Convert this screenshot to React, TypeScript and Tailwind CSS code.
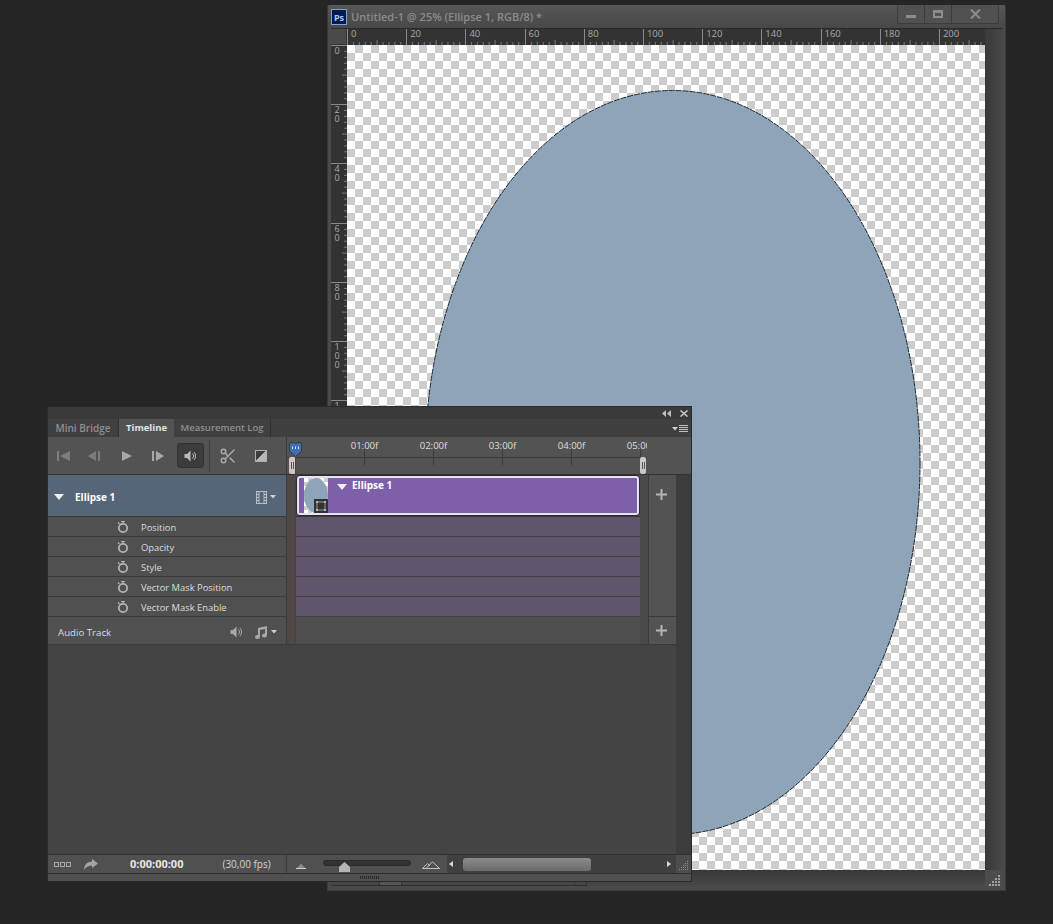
import React from 'react';
import { Scissors } from 'lucide-react';

const font = "font-['Open_Sans','Noto_Sans',sans-serif]";

const RulerTicks = () => (
    <svg width="59.2" height="16" className="absolute left-0 top-0">
        {Array.from({ length: 10 }).map((_, i) => {
            const x = i * 5.92 + 0.5;
            const h = i === 0 ? 16 : i === 5 ? 5 : 3;
            return <line key={i} x1={x} x2={x} y1={16 - h} y2={16} stroke={i === 0 ? '#8a8a8a' : '#7d7d7d'} />;
        })}
    </svg>
);

const LeftTicks = () => (
    <svg width="16" height="59.2" className="absolute left-0 top-0">
        {Array.from({ length: 10 }).map((_, i) => {
            const y = i * 5.92 + 0.5;
            const w = i === 0 ? 16 : i === 5 ? 5 : 3;
            return <line key={i} y1={y} y2={y} x1={16 - w} x2={16} stroke={i === 0 ? '#8a8a8a' : '#7d7d7d'} />;
        })}
    </svg>
);

const Stopwatch = () => (
    <svg width="14" height="14" viewBox="0 0 14 14" fill="none" stroke="#b4b4b4">
        <circle cx="7" cy="8" r="4.2" strokeWidth="1.8" />
        <path d="M5 1.5h4M7 1.5v2M2 2.5l1.5 1.5" strokeWidth="1.2" />
    </svg>
);

const Speaker = ({ color = '#a8a8a8' }: { color?: string }) => (
    <svg width="13" height="12" viewBox="0 0 13 12" fill="none">
        <path d="M0.5 4h2.5l3.5-3.5v11L3 8H0.5z" fill={color} />
        <path d="M8.5 3.5a3.5 3.5 0 0 1 0 5M10 2a6 6 0 0 1 0 8" stroke={color} />
    </svg>
);

const Caret = () => (
    <svg width="6" height="4" viewBox="0 0 6 4"><path d="M0 0h6L3 3.5z" fill="#d0d0d0" /></svg>
);

const Mountain = ({ big }: { big?: boolean }) =>
    big ? (
        <svg width="18" height="8" viewBox="0 0 18 8" fill="none" stroke="#c4c4c4">
            <path d="M0.5 7.5L5.5 2.5l2.5 2.5M4 7.5L10.5 0.8l7 6.7z" />
            <path d="M0.5 7.5h17" />
        </svg>
    ) : (
        <svg width="10" height="6" viewBox="0 0 10 6">
            <path d="M0 6L5 0.5 10 6z" fill="#8a8a8a" />
            <path d="M0 5.5h10" stroke="#d0d0d0" />
        </svg>
    );

const TransportIcon = ({ d, color = '#808080' }: { d: string; color?: string }) => (
    <svg width="14" height="10" viewBox="0 0 14 10"><path d={d} fill={color} /></svg>
);

const Plus = () => (
    <svg width="11" height="11" viewBox="0 0 11 11"><path d="M4.5 0h2v4.5H11v2H6.5V11h-2V6.5H0v-2h4.5z" fill="#b5b5b5" /></svg>
);

const PropRow = ({ name }: { name: string }) => (
    <div className="h-5 flex items-center border-b border-[#3a3a3a] bg-[#505050] pl-[68px] pt-[1px] box-border">
        <Stopwatch />
        <span className="ml-[11px] mt-[2px] text-[9.4px] text-[#dcdcdc] whitespace-nowrap">{name}</span>
    </div>
);

const App: React.FC = () => {
    const props = ['Position', 'Opacity', 'Style', 'Vector Mask Position', 'Vector Mask Enable'];

    return (
        <div className={`relative w-[1053px] h-[924px] overflow-hidden bg-[#252525] ${font}`}>
            {/* Document window */}
            <div className="absolute left-[327px] top-[5px] w-[679px] h-[886px] flex flex-col rounded-t-[3px] border border-[#3a3a3a] border-t-[#5a5a5a] bg-[#4a4a4a]">
                <div className="h-[22px] flex items-center bg-gradient-to-b from-[#565656] to-[#484848] pl-[3px] relative">
                    <div className="w-[16px] h-[16px] bg-[#001c4f] border border-[#7fa3d6] flex items-center justify-center text-[9px] font-bold text-[#a9cdf5] leading-none">Ps</div>
                    <span className="ml-[4px] text-[11px] font-semibold text-[#8b8b8b] whitespace-nowrap">Untitled-1 @ 25% (Ellipse 1, RGB/8) *</span>
                    <div className="ml-auto mr-[6px] -mt-[5px] h-[19px] w-[102px] flex border border-t-0 border-[#3c3c3c] rounded-b-[3px] bg-[#515151]">
                        <div className="w-[27px] border-r border-[#3c3c3c] flex items-center justify-center">
                            <div className="w-[10px] h-[3px] bg-[#8c8c8c] mt-[5px]" />
                        </div>
                        <div className="w-[27px] border-r border-[#3c3c3c] flex items-center justify-center">
                            <div className="w-[10px] h-[8px] border-2 border-t-[3px] border-[#8c8c8c]" />
                        </div>
                        <div className="flex-1 flex items-center justify-center">
                            <svg width="11" height="10" viewBox="0 0 11 10"><path d="M1 0.5l9 9M10 0.5l-9 9" stroke="#8c8c8c" strokeWidth="2" /></svg>
                        </div>
                    </div>
                </div>
                <div className="flex-1 flex flex-col ml-[3px] mr-[3px] min-h-0 border-t border-[#2b2b2b]">
                    <div className="flex h-[16px]">
                        <div className="w-[16px] shrink-0 bg-[#4a4a4a] border-r border-b border-[#333]" />
                        <div className="w-[638px] shrink-0 flex overflow-x-clip bg-[#333333]">
                            {[0, 20, 40, 60, 80, 100, 120, 140, 160, 180, 200].map((n) => (
                                <div key={n} className="relative w-[59.2px] shrink-0 h-[16px]">
                                    <RulerTicks />
                                    <span className="absolute left-[4px] top-0 text-[9.5px] leading-[10px] text-[#a9a9a9]">{n}</span>
                                </div>
                            ))}
                        </div>
                        <div className="flex-1 bg-gradient-to-r from-[#3a3a3a] to-[#464646]" />
                    </div>
                    <div className="flex flex-1 min-h-0">
                        <div className="w-[16px] shrink-0 bg-[#333333] overflow-hidden">
                            {['0', '20', '40', '60', '80', '100', '120'].map((n) => (
                                <div key={n} className="relative w-[16px] h-[59.2px]">
                                    <LeftTicks />
                                    <div className="absolute left-[2px] top-[1px] w-[8px] text-center text-[9px] leading-[9px] text-[#a9a9a9] whitespace-pre-line">
                                        {n.split('').join('\n')}
                                    </div>
                                </div>
                            ))}
                        </div>
                        {/* Canvas */}
                        <div className="relative w-[638px] shrink-0 bg-[repeating-conic-gradient(#cdcdcd_0%_25%,#ffffff_0%_50%)] bg-[length:16px_16px]">
                            <svg width="638" height="826" className="absolute left-0 top-0">
                                <ellipse cx="325.5" cy="417.5" rx="247.5" ry="372" fill="#8ea5b9" stroke="#1c2530" strokeWidth="1" strokeDasharray="6 1" />
                            </svg>
                        </div>
                        <div className="flex-1 bg-gradient-to-r from-[#383838] to-[#484848]" />
                    </div>
                    <div className="flex h-[16px] mb-[4px]">
                        {/* Status strip, only its lower edge shows under the timeline */}
                        <div className="w-[256px] shrink-0 flex items-end border-b border-[#2f2f2f] bg-[#464646]">
                            <div className="ml-[48px] w-[24px] h-[5px] bg-[#555555] border-x border-[#333] flex justify-center">
                                <div className="w-[10px] h-[2px] rounded-b-full bg-[#a0a0a0]" />
                            </div>
                            <div className="ml-[77px] mb-[3px] w-[2px] h-[2px] bg-[#6fa3d8]" />
                            <div className="ml-[14px] mb-[3px] w-[2px] h-[2px] bg-[#8fb0d0]" />
                            <div className="ml-[17px] mb-[3px] w-[2px] h-[2px] bg-[#d8a050]" />
                            <div className="ml-[58px] w-[13px] h-[5px] border-x border-[#333]" />
                        </div>
                        <div className="flex-1 bg-gradient-to-b from-[#383838] to-[#484848]" />
                        <div className="w-[17px] bg-[#4c4c4c] flex items-end justify-end">
                            <svg width="14" height="12" viewBox="0 0 14 12">
                                {[[10, 1], [7, 4], [10, 4], [4, 7], [7, 7], [10, 7], [1, 10], [4, 10], [7, 10], [10, 10]].map(([x, y], i) => (
                                    <rect key={i} x={x} y={y} width="2" height="2" fill="#a0a0a0" />
                                ))}
                            </svg>
                        </div>
                    </div>
                </div>
            </div>

            {/* Timeline panel */}
            <div className="absolute left-[48px] top-[407px] w-[643px] h-[474px] flex flex-col bg-[#444444] shadow-[0_0_0_1px_#2a2a2a] text-[#dcdcdc]">
                <div className="h-[12px] bg-[#3a3a3a] flex items-center justify-end pr-[3px] gap-[9px]">
                    <svg width="9" height="7" viewBox="0 0 9 7"><path d="M4 0v7L0 3.5zM9 0v7L5 3.5z" fill="#bdbdbd" /></svg>
                    <svg width="8" height="7" viewBox="0 0 8 7"><path d="M0.5 0.5l7 6M7.5 0.5l-7 6" stroke="#c8c8c8" strokeWidth="1.5" /></svg>
                </div>
                <div className="h-[18px] flex bg-[#404040] border-b border-[#2f2f2f] box-content -mb-[1px] font-semibold">
                    <div className="w-[71px] flex items-center justify-center text-[10px] text-[#8f8f8f] border-r border-[#2f2f2f]">Mini Bridge</div>
                    <div className="w-[55px] flex items-center justify-center text-[9.5px] text-[#e4e4e4] bg-[#535353] font-bold relative z-10 h-[19px]">Timeline</div>
                    <div className="w-[97px] flex items-center justify-center text-[9.5px] text-[#8f8f8f] border-r border-[#2f2f2f]">Measurement Log</div>
                    <div className="ml-auto mr-[3px] mt-[6px] flex gap-[1px]">
                        <div className="mt-[2px]"><Caret /></div>
                        <div className="w-[9px] h-[7px] border-y border-[#c0c0c0] bg-[linear-gradient(#c0c0c0_0_1px,transparent_1px_2px,#c0c0c0_2px_3px,transparent_3px)] bg-[length:100%_5px] bg-[position:0_1px]" />
                    </div>
                </div>

                {/* Transport and time ruler */}
                <div className="h-[38px] flex bg-[#535353] border-b border-[#333] box-border relative">
                    <div className="w-[239px] shrink-0 flex items-center border-r border-[#3a3a3a] relative">
                        <div className="ml-[9px]"><TransportIcon d="M0 0h2v10H0zM13 0v10L3 5z" color="#7c7c7c" /></div>
                        <div className="ml-[16px]"><TransportIcon d="M9 0v10L1 5zM11 0h2v10h-2z" color="#7c7c7c" /></div>
                        <div className="ml-[19px]"><TransportIcon d="M2 0l10 5-10 5z" color="#a8a8a8" /></div>
                        <div className="ml-[17px]"><TransportIcon d="M1 0h2v10H1zM5 0l8 5-8 5z" color="#a8a8a8" /></div>
                        <div className="ml-[12px] w-[27px] h-[25px] rounded-[3px] bg-[#3c3c3c] border border-[#333] flex items-center justify-center">
                            <Speaker color="#b8b8b8" />
                        </div>
                        <div className="ml-[5px] w-px h-[32px] bg-[#3f3f3f]" />
                        <div className="ml-[9px] text-[#a8a8a8]"><Scissors size={18} strokeWidth={2} /></div>
                        <div className="ml-[18px] w-[12px] h-[12px] border border-[#b0b0b0] bg-[linear-gradient(135deg,#3c3c3c_50%,#b8b8b8_50%)]" />
                    </div>
                    <div className="w-[360px] shrink-0 relative overflow-hidden">
                        <div className="h-[20px] border-b border-[#3a3a3a] flex pl-[43px] box-content">
                            {['01:00f', '02:00f', '03:00f', '04:00f', '05:00f'].map((t) => (
                                <div key={t} className="relative w-[69px] shrink-0 text-center text-[9.6px] leading-[18px] text-[#dedede]">
                                    {t}
                                    <div className="absolute left-[34px] top-[13px] w-px h-[15px] bg-[#3a3a3a]" />
                                </div>
                            ))}
                        </div>
                    </div>
                    {/* Work area handles and current time indicator */}
                    <div className="absolute left-[241px] top-[20px] w-[7px] h-[17px] rounded-[2px] bg-[#c8c8c8] flex items-center justify-center gap-px">
                        <div className="w-px h-[7px] bg-[#555]" /><div className="w-px h-[7px] bg-[#555]" />
                    </div>
                    <div className="absolute left-[592px] top-[20px] w-[6px] h-[17px] rounded-[2px] bg-[#c8c8c8] flex items-center justify-center gap-px">
                        <div className="w-px h-[7px] bg-[#555]" /><div className="w-px h-[7px] bg-[#555]" />
                    </div>
                    <svg width="13" height="15" viewBox="0 0 13 15" className="absolute left-[241px] top-[5px]">
                        <path d="M0.5 1L3 0.5 6.5 1.5 10 0.5 12.5 1V9L6.5 14.5 0.5 9z" fill="#3f6fb4" stroke="#222" strokeWidth="0.6" />
                        <path d="M3.5 4.5v2.5M6.5 4.5v2.5M9.5 4.5v2.5" stroke="#d8e4f4" />
                    </svg>
                </div>

                {/* Layers */}
                <div className="flex flex-1 min-h-0">
                    <div className="w-[628px] shrink-0 flex flex-col">
                        <div className="flex h-[142px]">
                            <div className="w-[239px] shrink-0 flex flex-col border-r border-[#3a3a3a] box-border">
                                <div className="h-[42px] flex items-center bg-[#566577] border-b border-[#3a3a3a] box-border pl-[6px] pr-[10px] pt-[3px]">
                                    <svg width="10" height="6" viewBox="0 0 10 6"><path d="M0 0h10L5 6z" fill="#f0f0f0" /></svg>
                                    <span className="ml-[11px] text-[10px] font-bold text-white">Ellipse 1</span>
                                    <div className="ml-auto flex items-center gap-[3px]">
                                        <svg width="11" height="13" viewBox="0 0 11 13" fill="none" stroke="#b9c0c8">
                                            <rect x="0.5" y="0.5" width="10" height="12" />
                                            <path d="M3 0.5v12M8 0.5v12M0.5 3.5H3M0.5 6.5H3M0.5 9.5H3M8 3.5h2.5M8 6.5h2.5M8 9.5h2.5" />
                                        </svg>
                                        <Caret />
                                    </div>
                                </div>
                                {props.map((p) => (
                                    <PropRow key={p} name={p} />
                                ))}
                            </div>
                            <div className="w-[9px] shrink-0 bg-[#4a4a4a]" />
                            <div className="w-[344px] shrink-0 flex flex-col">
                                <div className="h-[42px] bg-[#535353] border-b border-[#3a3a3a] box-border pl-px pt-px pr-[1px] pb-px">
                                    <div className="h-[39px] rounded-[3px] border-2 border-[#e8e2f2] bg-[#7e5fa9] flex pl-[5px] shadow-[0_0_0_1px_#2c2c2c]">
                                        <div className="relative w-[24px] h-[35px] shrink-0 overflow-hidden bg-[repeating-conic-gradient(#cdcdcd_0%_25%,#ffffff_0%_50%)] bg-[length:8px_8px]">
                                            <div className="absolute left-0 right-0 top-0 bottom-0 rounded-[50%] bg-[#8ea5b9]" />
                                            <div className="absolute right-0 bottom-0 w-[14px] h-[14px] bg-[#333] flex items-center justify-center">
                                                <svg width="12" height="12" viewBox="0 0 12 12" fill="none">
                                                    <rect x="2" y="2" width="8" height="8" stroke="#9a9a9a" />
                                                    <path d="M1 1h2v2H1zM9 1h2v2H9zM1 9h2v2H1zM9 9h2v2H9z" fill="#b4b4b4" />
                                                </svg>
                                            </div>
                                        </div>
                                        <svg width="10" height="6" viewBox="0 0 10 6" className="ml-[9px] mt-[6px]"><path d="M0 0h10L5 6z" fill="#f0f0f0" /></svg>
                                        <span className="ml-[5px] text-[10px] font-bold text-white">Ellipse 1</span>
                                    </div>
                                </div>
                                {props.map((p) => (
                                    <div key={p} className="h-5 bg-[#5f566b] border-b border-[#433f49] box-border" />
                                ))}
                            </div>
                            <div className="w-[8px] shrink-0 bg-[#4a4a4a]" />
                            <div className="flex-1 bg-[#535353] border-l border-b border-[#3a3a3a] box-border pt-[14px] pl-[7px]">
                                <Plus />
                            </div>
                        </div>
                        <div className="flex h-[28px] border-b border-[#3a3a3a] box-border">
                            <div className="w-[239px] shrink-0 bg-[#505050] border-r border-[#3a3a3a] box-border flex items-center pl-[10px] pr-[9px] pt-[3px]">
                                <span className="mt-[2px] text-[9.7px] text-[#dcdcdc]">Audio Track</span>
                                <div className="ml-auto"><Speaker /></div>
                                <div className="ml-[11px] flex items-center gap-[3px]">
                                    <svg width="14" height="13" viewBox="0 0 14 13"><path d="M4 2l9-2v9.5a2.5 2 0 1 1-2-2V3L6 4v7a2.5 2 0 1 1-2-2z" fill="#a8a8a8" /></svg>
                                    <Caret />
                                </div>
                            </div>
                            <div className="w-[9px] shrink-0 bg-[#4a4a4a]" />
                            <div className="w-[344px] shrink-0 bg-[#4f4f4f]" />
                            <div className="w-[8px] shrink-0 bg-[#4a4a4a]" />
                            <div className="flex-1 bg-[#535353] border-l border-[#3a3a3a] box-border pt-[8px] pl-[7px]">
                                <Plus />
                            </div>
                        </div>
                        <div className="flex-1 bg-[#444444]" />
                    </div>
                    <div className="flex-1 bg-[#3c3c3c]" />
                </div>

                {/* Footer */}
                <div className="h-[18px] flex border-t border-[#303030] box-content">
                    <div className="w-[239px] shrink-0 bg-[#505050] flex items-center pl-[6px] border-r border-[#3a3a3a] box-border">
                        <div className="flex gap-px">
                            <div className="w-[5px] h-[5px] border border-[#a8a8a8]" />
                            <div className="w-[5px] h-[5px] border border-[#a8a8a8]" />
                            <div className="w-[5px] h-[5px] border border-[#a8a8a8]" />
                        </div>
                        <svg width="14" height="11" viewBox="0 0 14 11" className="ml-[13px]"><path d="M8 0l6 4.5L8 9V6.5C5 6.5 2 7.5 0 11c0-5 3-8 8-8.5z" fill="#a4a4a4" /></svg>
                        <span className="ml-[32px] text-[11px] font-bold text-[#e6e6e6]">0:00:00:00</span>
                        <span className="ml-[39px] text-[10px] text-[#d4d4d4]">(30,00 fps)</span>
                    </div>
                    <div className="w-[160px] shrink-0 bg-[#505050] flex items-start pl-[9px] relative">
                        <div className="mt-[8px] h-[6px] flex"><Mountain /></div>
                        <div className="ml-[17px] mt-[5px] w-[88px] h-[6px] rounded-full bg-[#333] border border-[#2a2a2a]" />
                        <svg width="11" height="10" viewBox="0 0 11 10" className="absolute left-[52px] top-[7px]"><path d="M5.5 0L11 5V10H0V5z" fill="#b4b4b4" /></svg>
                        <div className="ml-[11px] mt-[6px] h-[8px] flex"><Mountain big /></div>
                    </div>
                    <div className="w-[229px] shrink-0 bg-[#404040] flex items-center relative">
                        <svg width="4" height="6" viewBox="0 0 4 6" className="ml-[2px]"><path d="M4 0v6L0 3z" fill="#d8d8d8" /></svg>
                        <div className="ml-[10px] w-[128px] h-[13px] rounded-[3px] bg-gradient-to-b from-[#8a8a8a] to-[#6c6c6c]" />
                        <svg width="4" height="6" viewBox="0 0 4 6" className="ml-auto mr-[5px]"><path d="M0 0v6l4-3z" fill="#d8d8d8" /></svg>
                    </div>
                    <div className="flex-1 bg-[#4d4d4d] flex items-end justify-end pr-[2px] pb-[2px]">
                        <svg width="10" height="10" viewBox="0 0 10 10">
                            {[[8, 0], [6, 2], [8, 2], [4, 4], [6, 4], [8, 4], [2, 6], [4, 6], [6, 6], [8, 6], [0, 8], [2, 8], [4, 8], [6, 8], [8, 8]].map(([x, y], i) => (
                                <rect key={i} x={x} y={y} width="1" height="1" fill="#8f8f8f" />
                            ))}
                        </svg>
                    </div>
                </div>
                <div className="h-[7px] bg-[#505050] border-t border-[#2f2f2f] box-content flex items-center pl-[312px]">
                    <div className="w-[19px] h-[3px] bg-[repeating-linear-gradient(90deg,#2a2a2a_0_1px,transparent_1px_2px)]" />
                </div>

                {/* Current time line */}
                <div className="absolute left-[247px] top-[49px] w-px h-[189px] bg-[#e00000]" />
            </div>
        </div>
    );
};

export default App;
